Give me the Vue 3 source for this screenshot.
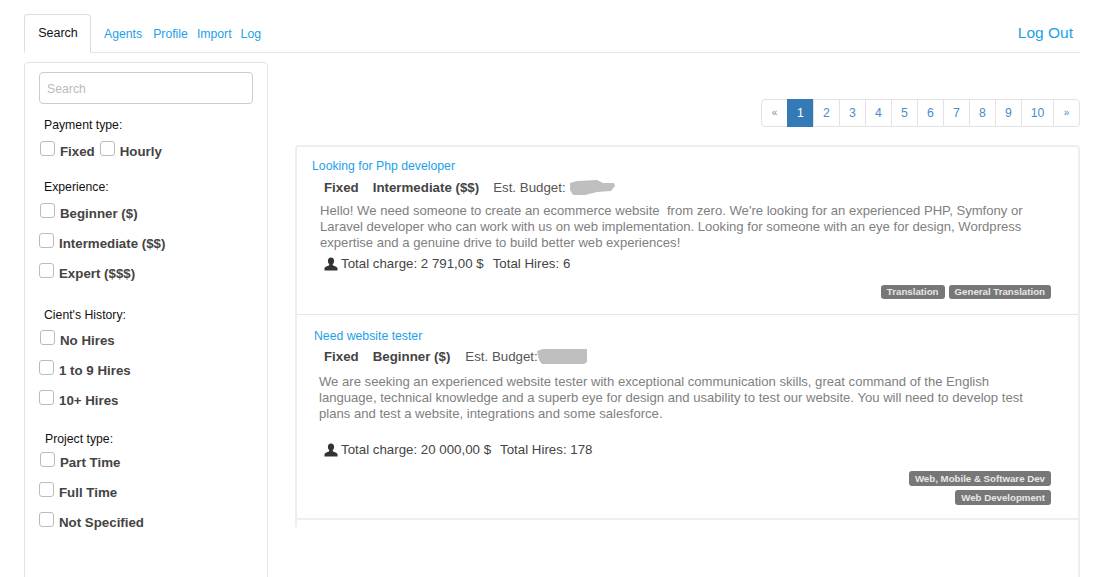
<script setup>
const tabs = ['Agents', 'Profile', 'Import', 'Log']
const groups = [
  { title: 'Experience:', cls: 'g-exp', items: ['Beginner ($)', 'Intermediate ($$)', 'Expert ($$$)'] },
  { title: "Cient's History:", cls: 'g-hist', items: ['No Hires', '1 to 9 Hires', '10+ Hires'] },
  { title: 'Project type:', cls: 'g-proj', items: ['Part Time', 'Full Time', 'Not Specified'] }
]
const pages = ['1', '2', '3', '4', '5', '6', '7', '8', '9', '10']
const jobs = [
  {
    title: 'Looking for Php developer', cls: 'job-a', type: 'Fixed', level: 'Intermediate ($$)',
    blob: 'M3 3 L10 1 L30 0 L36 3 L47 3 L48 6 L44 11 L30 12 L18 15 L6 15 L3 10 Z',
    desc: "Hello! We need someone to create an ecommerce website \u00a0from zero. We're looking for an experienced PHP, Symfony or Laravel developer who can work with us on web implementation. Looking for someone with an eye for design, Wordpress expertise and a genuine drive to build better web experiences!",
    charge: '2 791,00 $', hires: '6', tags: ['Translation', 'General Translation']
  },
  {
    title: 'Need website tester', cls: 'job-b', type: 'Fixed', level: 'Beginner ($)',
    blob: 'M0 2 L6 0 L50 0 L50 13 L47 15 L5 15 L2 11 Z',
    desc: 'We are seeking an experienced website tester with exceptional communication skills, great command of the English language, technical knowledge and a superb eye for design and usability to test our website. You will need to develop test plans and test a website, integrations and some salesforce.',
    charge: '20 000,00 $', hires: '178', tags: ['Web, Mobile & Software Dev', 'Web Development']
  }
]
</script>

<template>
  <div class="page">
    <nav class="nav">
      <a class="tab">Search</a>
      <a v-for="t in tabs" :key="t" class="link">{{ t }}</a>
      <a class="logout">Log Out</a>
    </nav>
    <div class="cols">
      <aside class="side">
        <input class="search" placeholder="Search" />
        <div class="gtitle g-pay">Payment type:</div>
        <div class="inline-row">
          <label class="ck"><span class="box"></span><b>Fixed</b></label>
          <label class="ck"><span class="box"></span><b>Hourly</b></label>
        </div>
        <section v-for="g in groups" :key="g.title" :class="g.cls">
          <div class="gtitle">{{ g.title }}</div>
          <label v-for="i in g.items" :key="i" class="ck row"><span class="box"></span><b>{{ i }}</b></label>
        </section>
      </aside>
      <main class="main">
        <ul class="pager">
          <li class="muted small">«</li>
          <li v-for="p in pages" :key="p" :class="{ on: p === '1', wide: p === '10' }">{{ p }}</li>
          <li class="small">»</li>
        </ul>
        <div class="panel">
          <div class="list">
            <article v-for="j in jobs" :key="j.title" class="job" :class="j.cls">
              <a class="jtitle">{{ j.title }}</a>
              <div class="meta">
                <b>{{ j.type }}</b><b class="lvl">{{ j.level }}</b><span class="est">Est. Budget:</span>
                <svg class="blur" viewBox="0 0 50 16" width="50" height="16"><path fill="#bfbfbf" :d="j.blob" /></svg>
              </div>
              <p class="desc">{{ j.desc }}</p>
              <div class="stats">
                <svg class="person" viewBox="0 0 14 14" width="14" height="14">
                  <path fill="#333" d="M7 .5C5 .5 3.900 2 3.900 3.900c0 1.300.5 2.500 1.300 3.200.2.5.1 1-.3 1.300C3.500 9 1 9.500.5 11v2.500h13V11c-.5-1.500-3-2-4.400-2.600-.4-.3-.5-.8-.3-1.300.8-.7 1.300-1.900 1.300-3.200C10.100 2 9 .5 7 .5z"/>
                </svg>
                <span>Total charge: {{ j.charge }}</span><span class="hires">Total Hires: {{ j.hires }}</span>
              </div>
              <div class="tags"><span v-for="t in j.tags" :key="t" class="tag">{{ t }}</span></div>
            </article>
          </div>
        </div>
      </main>
    </div>
  </div>
</template>

<style>
html, body { margin: 0; height: 100%; overflow: hidden; background: #fff; }
</style>

<style scoped>
.page { height: 577px; overflow: hidden; padding: 14px 30px 0 24px; box-sizing: border-box; font-family: "Liberation Sans", Arial, sans-serif; font-size: 12.25px; color: #333; }
.nav { display: flex; align-items: flex-end; height: 39px; border-bottom: 1px solid #e6e6e6; box-sizing: border-box; }
.tab { box-sizing: border-box; width: 67px; height: 39px; border: 1px solid #ddd; border-bottom: 1px solid #fff; border-radius: 4px 4px 0 0; color: #111; text-align: center; font-size: 12.5px; line-height: 36px; margin-bottom: -1px; padding-left: 1px; }
.link { color: #1da1e8; margin-bottom: 11px; margin-left: 9px; line-height: 14px; }
.tab + .link { margin-left: 13px; }
.tab + .link + .link { margin-left: 11px; }
.logout { margin-left: auto; font-size: 15.5px; color: #1da1e8; line-height: 20px; margin-bottom: 9px; margin-right: 7px; }
.cols { display: flex; margin-top: 9px; align-items: flex-start; }
.side { box-sizing: border-box; width: 244px; height: 560px; flex: none; border: 1px solid #e3e3e3; border-radius: 4px; padding: 9px 14px; }
.search { display: block; box-sizing: border-box; width: 214px; height: 32px; border: 1px solid #ccc; border-radius: 4px; padding: 2px 7px 0; font: 12.25px "Liberation Sans", Arial, sans-serif; outline: none; }
.search::placeholder { color: #bbb; opacity: 1; }
.gtitle { color: #111; line-height: 14px; padding-left: 5px; }
.g-pay { margin-top: 14px; }
.inline-row { display: flex; gap: 5px; margin-top: 9px; height: 19px; }
.ck { display: flex; align-items: flex-start; color: #444; font-size: 13.3px; line-height: 16px; }
.ck b { margin-left: 5px; margin-top: 3px; font-weight: 700; }
.box { display: block; flex: none; box-sizing: border-box; width: 15px; height: 15px; margin-left: 1px; border: 1px solid #bbb; border-radius: 3px; background: #fff; }
.ck + .ck .box { margin-left: 0; }
.row { height: 30px; }
.g-exp { margin-top: 20px; }
.g-exp .gtitle { margin-bottom: 9px; }
.g-hist { margin-top: 14px; }
.g-hist .gtitle { margin-bottom: 8px; }
.g-proj { margin-top: 11px; }
.g-proj .gtitle { margin-bottom: 6px; padding-left: 6px; }
.g-hist .row:last-child, .g-exp .row:last-child { height: 31px; }
.main { flex: 1; margin-left: 27px; min-width: 0; }
.pager { list-style: none; display: flex; justify-content: flex-end; margin: 37px 0 0; padding: 0; }
.pager li { box-sizing: border-box; width: 27px; height: 28px; border: 1px solid #e3e3e3; margin-left: -1px; line-height: 26px; text-align: center; color: #4a8cc6; background: #fff; }
.pager li:first-child { border-radius: 4px 0 0 4px; }
.pager li:last-child { border-radius: 0 4px 4px 0; }
.pager .on { background: #337ab7; border-color: #337ab7; color: #fff; }
.pager .wide { width: 33px; }
.pager .small { font-size: 10px; }
.pager .muted { color: #888; }
.panel { box-sizing: border-box; margin-top: 18px; height: 440px; border-top: 2px solid #eee; border-right: 2px solid #eee; border-radius: 4px 4px 0 0; }
.list { box-sizing: border-box; height: 380px; border-left: 2px solid #eee; }
.job { box-sizing: border-box; }
.job-a { height: 168px; padding: 12px 27px 0 15px; border-bottom: 1px solid #e6e6e6; }
.job-b { height: 205px; padding: 14px 27px 0 17px; border-bottom: 2px solid #eee; }
.jtitle { display: block; color: #1da1e8; line-height: 14px; }
.meta { display: flex; align-items: center; padding-left: 12px; margin-top: 6px; height: 17px; font-size: 13.3px; color: #444; }
.job-b .meta { padding-left: 10px; margin-top: 5px; }
.meta b { font-weight: 700; }
.lvl { margin-left: 14px; }
.est { margin-left: 14px; color: #555; }
.job-b .est { margin-left: 15px; }
.blur { margin-left: 1px; flex: none; filter: blur(.6px); }
.job-b .blur { margin-left: -1px; }
.desc { margin: 7px 0 0 8px; font-size: 13.1px; line-height: 16px; color: #808080; width: 725px; }
.job-b .desc { margin-left: 5px; margin-top: 9px; }
.stats { display: flex; align-items: center; font-size: 13.3px; color: #444; line-height: 17px; padding-left: 12px; margin-top: 4px; }
.job-b .stats { margin-top: 19px; padding-left: 10px; }
.person { margin-right: 3px; flex: none; }
.hires { margin-left: 9px; }
.tags { display: flex; flex-wrap: wrap; justify-content: flex-end; gap: 4px; margin-top: 13px; }
.job-b .tags { margin-left: auto; width: 180px; }
.tag { background: #777; color: #e8e8e8; font-size: 9.7px; font-weight: 700; line-height: 14px; height: 14px; padding: 0 6px; border-radius: 3px; white-space: nowrap; }
.job-b .tag { line-height: 15px; height: 15px; }
</style>
